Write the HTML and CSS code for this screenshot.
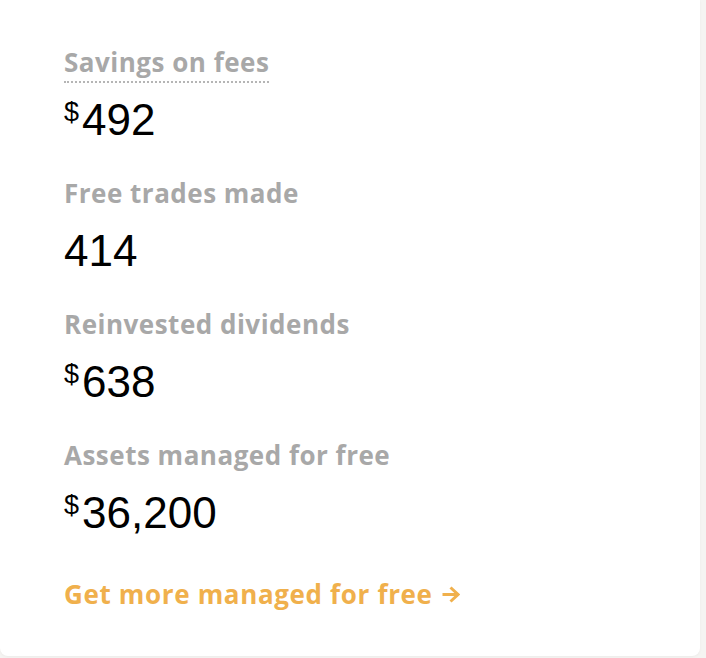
FILE: index.html
```html
<!DOCTYPE html>
<html>
<head>
<meta charset="utf-8">
<link rel="stylesheet" href="styles.css">
</head>
<body>
<div class="card">
  <div class="stat">
    <div class="label"><span class="dotted">Savings on fees</span></div>
    <div class="value"><span class="cur">$</span>492</div>
  </div>
  <div class="stat">
    <div class="label">Free trades made</div>
    <div class="value">414</div>
  </div>
  <div class="stat">
    <div class="label">Reinvested dividends</div>
    <div class="value"><span class="cur">$</span>638</div>
  </div>
  <div class="stat">
    <div class="label">Assets managed for free</div>
    <div class="value"><span class="cur">$</span>36,200</div>
  </div>
  <a class="link" href="#">Get more managed for free<svg class="arrow" width="19" height="17" viewBox="0 0 19 17"><path d="M1.5 8.5 H17 M9.5 1.5 L17 8.5 L9.5 15.5" fill="none" stroke="#f0b04c" stroke-width="3" stroke-linecap="butt" stroke-linejoin="miter"/></svg></a>
</div>
</body>
</html>
```
FILE: styles.css
```css
html, body {
  margin: 0;
  padding: 0;
  background: #f5f4f2;
}
body {
  width: 706px;
  height: 658px;
  overflow: hidden;
}
.card {
  width: 700px;
  height: 656px;
  box-sizing: border-box;
  background: #ffffff;
  border-radius: 0 0 8px 8px;
  box-shadow: 0 1px 3px rgba(0,0,0,0.04);
  padding: 47px 0 0 64px;
}
.stat {
  display: flex;
  flex-direction: column;
  align-items: flex-start;
  margin-bottom: 34px;
}
.label {
  font-family: "Open Sans", "Lato", sans-serif;
  font-weight: 700;
  font-size: 26px;
  line-height: 30px;
  letter-spacing: 0.5px;
  color: #a8a8a8;
}
.dotted {
  border-bottom: 2px dotted #b5b5b5;
  padding-bottom: 1px;
}
.value {
  font-family: "Liberation Sans", Arial, sans-serif;
  font-size: 44px;
  line-height: 48px;
  color: #000;
  margin-top: 19px;
}
.cur {
  font-size: 27px;
  line-height: 0;
  vertical-align: 14px;
  margin-right: 3px;
}
.link {
  display: inline-flex;
  align-items: center;
  gap: 8px;
  font-family: "Open Sans", "Lato", sans-serif;
  font-weight: 700;
  font-size: 26px;
  line-height: 30px;
  letter-spacing: 0.65px;
  color: #f0b04c;
  text-decoration: none;
  margin-top: 8px;
}
```
